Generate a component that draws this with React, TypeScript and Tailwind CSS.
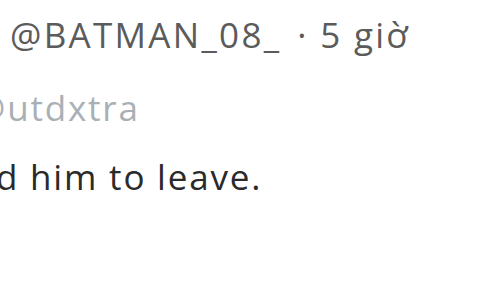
export default function App() {
  return (
    <div className="w-[480px] h-[288px] bg-white overflow-hidden relative font-['Open_Sans',sans-serif]">
      <div className="flex flex-col">
        {/* Handle + time */}
        <div className="pl-[10px] pt-[12px] h-[46px] flex items-baseline gap-[16px] text-[35px] leading-[46px] tracking-[2.3px] text-[#5b5b5b] whitespace-nowrap">
          <span>@BATMAN_08_</span>
          <span>· 5 giờ</span>
        </div>

        {/* Replying to */}
        <div className="mt-[39px] -ml-[26px] h-[46px] text-[35px] leading-[46px] tracking-[1.8px] text-[#a8b0b6] whitespace-nowrap">
          @utdxtra
        </div>

        {/* Body */}
        <div className="mt-[23px] -ml-[4px] h-[46px] text-[35px] leading-[46px] tracking-[1.8px] text-[#2a2a2a] whitespace-nowrap">
          d him to leave.
        </div>
      </div>
    </div>
  )
}
